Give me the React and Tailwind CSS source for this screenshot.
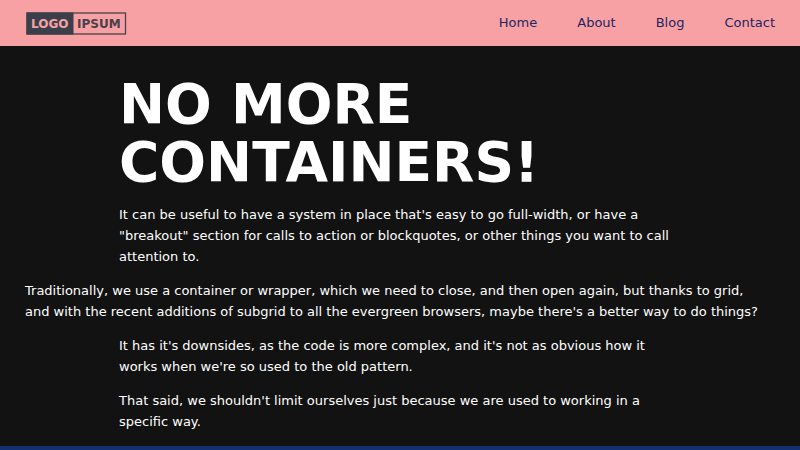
const links = ["Home", "About", "Blog", "Contact"];

function Logo() {
  return (
    <svg
      viewBox="0 0 102 23"
      className="h-[23px] w-[102px]"
      fontFamily="'DejaVu Sans', sans-serif"
      fontSize="12"
      fontWeight="700"
      role="img"
      aria-label="Logo Ipsum"
    >
      <rect x="2" y="1" width="98.5" height="21" fill="none" stroke="#4a4049" strokeWidth="1.3" />
      <rect x="1.5" y="0.5" width="47" height="22" fill="#3b3f4a" />
      <text x="6" y="15.5" fill="#f8a1a4">
        LOGO
      </text>
      <text x="52" y="15.5" fill="#4a4049">
        IPSUM
      </text>
    </svg>
  );
}

export default function App() {
  return (
    <div className="flex min-h-screen flex-col bg-[#121212] font-['DejaVu_Sans',sans-serif] text-[13px] leading-[21px] text-white">
      <header className="flex h-[46px] items-center justify-between bg-[#f8a1a4] px-[25px]">
        <a href="#">
          <Logo />
        </a>
        <nav className="flex gap-10 leading-5 text-[#1b2663]">
          {links.map((link) => (
            <a key={link} href="#">
              {link}
            </a>
          ))}
        </nav>
      </header>

      <main className="grid grid-cols-[1fr_minmax(0,562px)_1fr] gap-y-[13px] px-[25px] pt-[29px] pb-[14px] *:col-start-2">
        <h1 className="text-[55px] leading-[58px] font-bold">NO MORE CONTAINERS!</h1>
        <p>
          It can be useful to have a system in place that's easy to go full-width, or have a
          "breakout" section for calls to action or blockquotes, or other things you want to call
          attention to.
        </p>
        <p className="col-span-full! pr-2">
          Traditionally, we use a container or wrapper, which we need to close, and then open again,
          but thanks to grid, and with the recent additions of subgrid to all the evergreen browsers,
          maybe there's a better way to do things?
        </p>
        <p>
          It has it's downsides, as the code is more complex, and it's not as obvious how it works
          when we're so used to the old pattern.
        </p>
        <p>
          That said, we shouldn't limit ourselves just because we are used to working in a specific
          way.
        </p>
      </main>

      <section className="min-h-1 grow bg-[#142f6e]" />
    </div>
  );
}
